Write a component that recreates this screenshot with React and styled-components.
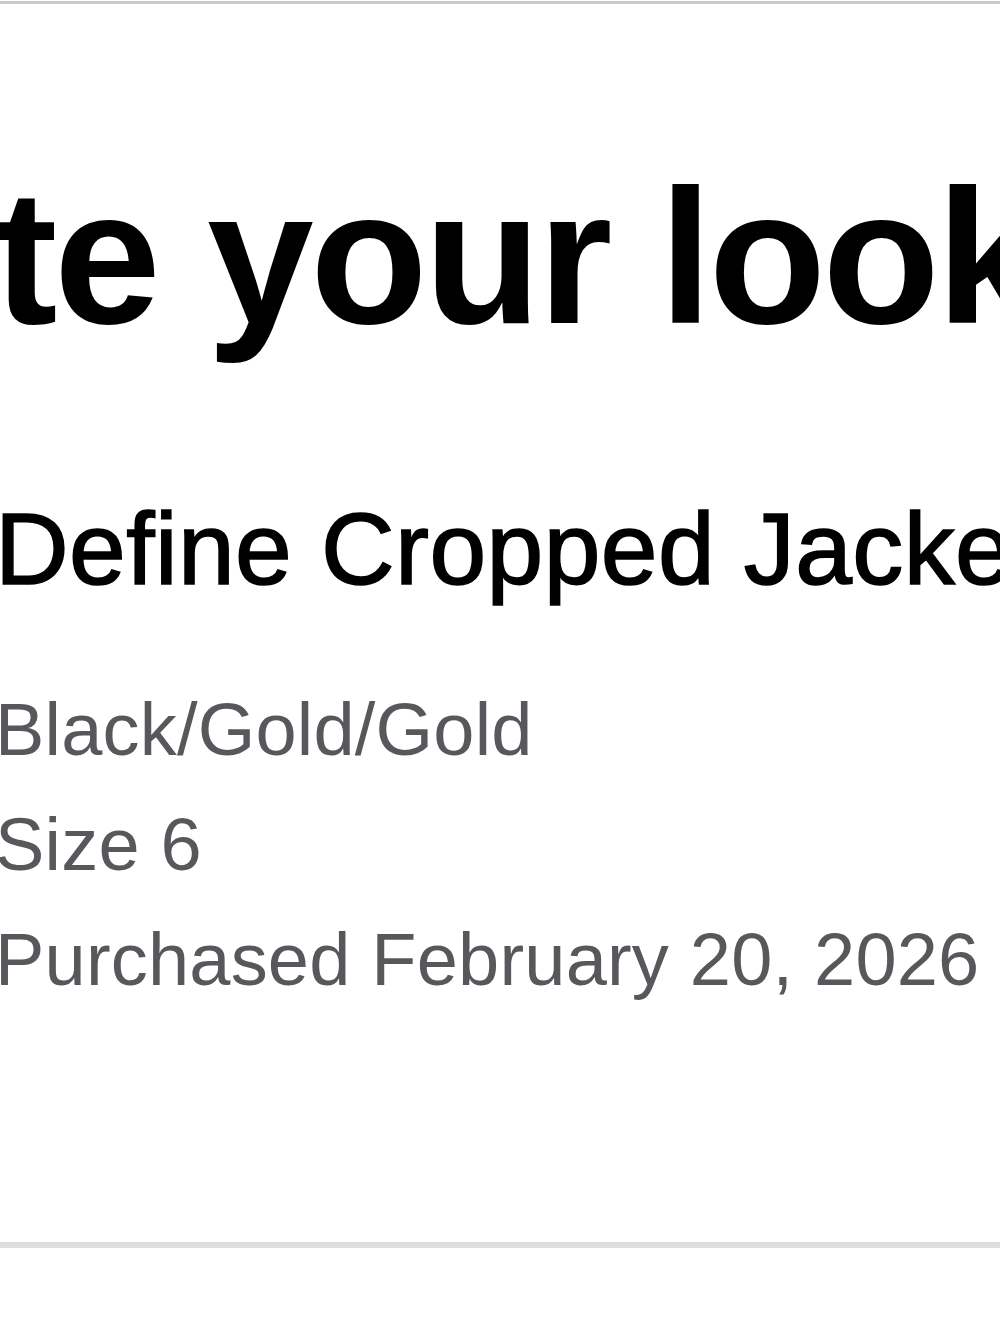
import React from 'react';
import styled, { createGlobalStyle } from 'styled-components';

const COLORS = {
  ink: '#000000',
  muted: '#56585c',
  ruleTop: '#c9c9c9',
  ruleBottom: '#dedede',
};

const GlobalStyle = createGlobalStyle`
  html, body {
    margin: 0;
    padding: 0;
    background: #ffffff;
    overflow: hidden;
  }
  body {
    font-family: "Liberation Sans", Arial, sans-serif;
    -webkit-font-smoothing: antialiased;
  }
`;

const Page = styled.main`
  width: 1000px;
  height: 1333px;
  padding-top: 1px;
  box-sizing: border-box;
  overflow: hidden;
`;

const Rule = styled.hr`
  margin: 0;
  border: 0;
  height: ${p => p.thick}px;
  background: ${p => p.color};
`;

const Content = styled.section`
  margin-left: -5px;
  display: flex;
  flex-direction: column;
`;

// the heading is wider than the viewport, only "te your look" shows
const Title = styled.h1`
  margin: 157px 0 0 -240px;
  font-size: 192px;
  line-height: 1;
  font-weight: 700;
  letter-spacing: -3.5px;
  color: ${COLORS.ink};
  white-space: nowrap;
`;

const ProductName = styled.h2`
  margin: 145px 0 0 0;
  font-size: 102px;
  line-height: 1;
  font-weight: 400;
  letter-spacing: 0.4px;
  -webkit-text-stroke: 1.6px ${COLORS.ink};
  color: ${COLORS.ink};
  white-space: nowrap;
`;

const Details = styled.ul`
  list-style: none;
  margin: 72px 0 225px 0;
  padding: 0;
`;

const Detail = styled.li`
  font-size: 74px;
  line-height: 115px;
  letter-spacing: 0.2px;
  color: ${COLORS.muted};
  white-space: nowrap;
`;

const details = ['Black/Gold/Gold', 'Size 6', 'Purchased February 20, 2026'];

export default function App() {
  return (
    <Page>
      <GlobalStyle />
      <Rule thick={3} color={COLORS.ruleTop} />
      <Content>
        <Title>Rate your look</Title>
        <ProductName>Define Cropped Jacket</ProductName>
        <Details>
          {details.map(d => <Detail key={d}>{d}</Detail>)}
        </Details>
      </Content>
      <Rule thick={6} color={COLORS.ruleBottom} />
    </Page>
  );
}
